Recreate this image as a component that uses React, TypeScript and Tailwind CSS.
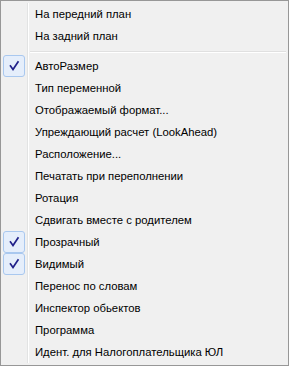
import React from "react";

type Item = { label: string; checked?: boolean } | { sep: true };

const items: Item[] = [
  { label: "На передний план" },
  { label: "На задний план" },
  { sep: true },
  { label: "АвтоРазмер", checked: true },
  { label: "Тип переменной" },
  { label: "Отображаемый формат..." },
  { label: "Упреждающий расчет (LookAhead)" },
  { label: "Расположение..." },
  { label: "Печатать при переполнении" },
  { label: "Ротация" },
  { label: "Сдвигать вместе с родителем" },
  { label: "Прозрачный", checked: true },
  { label: "Видимый", checked: true },
  { label: "Перенос по словам" },
  { label: "Инспектор обьектов" },
  { label: "Программа" },
  { label: "Идент. для Налогоплательщика ЮЛ" },
];

function Check() {
  return (
    <div className="w-[22px] h-[22px] rounded-[3px] border border-[#a9c8ef] bg-[#e5eefb] flex items-center justify-center">
      <svg width="20" height="20" viewBox="0 0 20 20">
        <path
          d="M6.5 10 L9 13.5 L14 6"
          fill="none"
          stroke="#20208a"
          strokeWidth="1.7"
          strokeLinecap="square"
        />
      </svg>
    </div>
  );
}

export default function App() {
  return (
    <div
      className="relative w-[289px] h-[366px] border border-[#979797] bg-[#f0f0f0] p-[2px] text-black text-[11.3px]"
      style={{ fontFamily: '"Liberation Sans", Arial, sans-serif' }}
    >
      <div className="absolute top-[2px] bottom-[2px] left-[26px] w-px bg-[#e2e3e3]" />
      <div className="absolute top-[2px] bottom-[2px] left-[27px] w-px bg-white" />
      <div className="relative flex flex-col">
        {items.map((it, i) =>
          "sep" in it ? (
            <div key={i} className="h-[8px] flex flex-col pt-[4px] pl-[27px]">
              <div className="h-px bg-[#e0e0e0]" />
              <div className="h-px bg-white" />
            </div>
          ) : (
            <div key={i} className="h-[22px] flex items-center">
              <div className="w-[22px] h-[22px] shrink-0">{it.checked ? <Check /> : null}</div>
              <span className="ml-[10px] whitespace-nowrap">{it.label}</span>
            </div>
          )
        )}
      </div>
    </div>
  );
}
